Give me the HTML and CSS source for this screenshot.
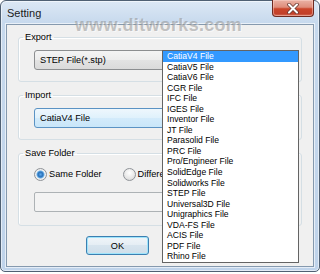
FILE: index.html
```html
<!DOCTYPE html>
<html lang="en">
<head>
  <meta charset="UTF-8">
  <title>Setting</title>
  <link rel="stylesheet" href="styles.css">
</head>
<body>

  <div class="window">
    <div class="titlebar">
      <span class="title">Setting</span>
      <button class="close-btn" aria-label="Close">
        <svg width="14" height="11" viewBox="0 0 14 11">
          <path d="M3 1.5 L11 9.5 M11 1.5 L3 9.5" stroke="#6b3a33" stroke-width="3.6" stroke-linecap="round"/>
          <path d="M3 1.5 L11 9.5 M11 1.5 L3 9.5" stroke="#fff" stroke-width="2" stroke-linecap="round"/>
        </svg>
      </button>
    </div>

    <div class="client">
      <fieldset class="group">
        <legend>Export</legend>
        <div class="combo">
          <span>STEP File(*.stp)</span>
          <span class="arrow"></span>
        </div>
      </fieldset>

      <fieldset class="group">
        <legend>Import</legend>
        <div class="combo combo-active">
          <span>CatiaV4 File</span>
          <span class="arrow"></span>
        </div>
      </fieldset>

      <fieldset class="group group-save">
        <legend>Save Folder</legend>
        <!-- the dropdown covers the right part of this row -->
        <div class="radio-row">
          <label class="radio checked"><span class="circle"></span>Same Folder</label>
          <label class="radio"><span class="circle"></span>Differe</label>
        </div>
        <div class="textbox"></div>
      </fieldset>

      <div class="buttons">
        <button class="btn btn-default">OK</button>
        <span class="btn-slot"></span>
      </div>

      <ul class="droplist">
        <li class="selected">CatiaV4 File</li>
        <li>CatiaV5 File</li>
        <li>CatiaV6 File</li>
        <li>CGR File</li>
        <li>IFC File</li>
        <li>IGES File</li>
        <li>Inventor File</li>
        <li>JT File</li>
        <li>Parasolid File</li>
        <li>PRC File</li>
        <li>Pro/Engineer File</li>
        <li>SolidEdge File</li>
        <li>Solidworks File</li>
        <li>STEP File</li>
        <li>Universal3D File</li>
        <li>Unigraphics File</li>
        <li>VDA-FS File</li>
        <li>ACIS File</li>
        <li>PDF File</li>
        <li>Rhino File</li>
      </ul>
    </div>

    <div class="watermark">www.ditworks.com</div>
  </div>

</body>
</html>
```

FILE: styles.css
```css
body {
  margin: 0;
  background: #fff;
  font-family: "Liberation Sans", Arial, sans-serif;
  color: #000;
}
.window {
  position: relative;
  width: 320px;
  height: 272px;
  box-sizing: border-box;
  display: flex;
  flex-direction: column;
  padding: 0 5px 4px 5px;
  border: 1px solid #4f6073;
  border-radius: 6px 6px 5px 5px;
  background: linear-gradient(#dce8f5, #c7d9ed 22px, #bfd3ea);
  box-shadow: inset 0 0 0 1px rgba(255, 255, 255, 0.55);
}
.titlebar {
  display: flex;
  align-items: flex-start;
  height: 23px;
}
.title {
  margin: 6px 0 0 1px;
  font-size: 11px;
  line-height: 13px;
  color: #1b1b1b;
}
.close-btn {
  margin: -1px 0 0 auto;
  width: 42px;
  height: 17px;
  padding: 0;
  display: flex;
  align-items: center;
  justify-content: center;
  border: 1px solid #6e2a20;
  border-top: none;
  border-radius: 0 0 4px 4px;
  background: linear-gradient(#eab2a5, #df8d7b 45%, #cb452a 55%, #c2402a 85%, #d6705a);
  box-shadow: inset 0 0 0 1px rgba(255, 220, 210, 0.45);
}
.client {
  position: relative;
  flex: 1;
  padding-top: 6px;
  background: #f0f0f0;
  border: 1px solid #8599ae;
  box-shadow: 0 0 0 1px rgba(255, 255, 255, 0.6);
  font-size: 9.2px;
}
.group {
  margin: 0 11px 8px;
  padding: 7px 15px 11px;
  border: 1px solid #d5dfe5;
  border-radius: 3px;
  box-shadow: inset 1px 1px 0 #fff;
}
.group + .group {
  margin-top: -1px;
}
.group-save {
  margin-top: 0;
  padding-top: 8px;
  padding-bottom: 13px;
}
.group legend {
  margin-left: -11px;
  padding: 0 2px;
  line-height: 12px;
}
.combo {
  display: flex;
  align-items: center;
  height: 20px;
  box-sizing: border-box;
  padding: 0 0 0 5px;
  border: 1px solid #8c8e90;
  border-radius: 3px;
  background: linear-gradient(#f4f4f4, #ececec 50%, #e3e3e3 50%, #dadada);
}
.combo-active {
  border-color: #5b93c4;
  background: linear-gradient(#eef7fd, #dff1fc 50%, #d3ebfb 50%, #c9e6f9);
}
.combo .arrow {
  margin-left: auto;
  margin-right: 6px;
  border: 3px solid transparent;
  border-top: 4px solid #000;
  border-bottom: none;
}
.radio-row {
  display: flex;
  align-items: center;
  gap: 21px;
  height: 14px;
  width: 128px;
  overflow: hidden;
}
.radio {
  display: flex;
  align-items: center;
  gap: 2px;
  flex-shrink: 0;
}
.circle {
  width: 11px;
  height: 11px;
  border-radius: 50%;
  border: 1px solid #8f9398;
  background: radial-gradient(circle at 50% 35%, #ffffff, #e6e6e6 60%, #d0d0d0);
}
.radio.checked .circle {
  background: radial-gradient(circle, #5aa8ec 0, #2a6fb7 2.5px, #6ab0e8 3.5px, #f2f2f2 4.5px, #dcdcdc 100%);
}
.textbox {
  margin-top: 11px;
  height: 20px;
  box-sizing: border-box;
  border: 1px solid #adb2b5;
  border-radius: 2px;
  background: #f3f3f3;
}
.buttons {
  display: flex;
  justify-content: center;
  gap: 22px;
  margin-top: 10px;
}
.btn,
.btn-slot {
  width: 63px;
  height: 19px;
}
.btn {
  padding: 0;
  font-family: "Liberation Sans", Arial, sans-serif;
  font-size: 9.2px;
  color: #000;
  border: 1px solid #707070;
  border-radius: 3px;
  background: linear-gradient(#f2f2f2, #ebebeb 50%, #dddddd 50%, #cfcfcf);
}
.btn-default {
  border-color: #3c7fb1;
  box-shadow: inset 0 0 0 1px #9fe4fb;
  background: linear-gradient(#f0f5f9, #e4edf4 50%, #d7e4ee 50%, #cfdeea);
}
.droplist {
  position: absolute;
  left: 155px;
  top: 25px;
  width: 137px;
  box-sizing: border-box;
  margin: 0;
  padding: 0;
  list-style: none;
  border: 1px solid #646464;
  background: #fff;
  font-size: 8.6px;
}
.droplist li {
  height: 10.55px;
  line-height: 10.55px;
  padding-left: 4px;
}
.droplist li.selected {
  background: #3399ff;
  color: #fff;
}
.watermark {
  position: absolute;
  left: 74px;
  top: 15px;
  font-size: 18px;
  line-height: 18px;
  font-weight: bold;
  letter-spacing: 0.3px;
  color: rgba(140, 140, 140, 0.5);
  text-shadow: 1px 1px 0 rgba(255, 255, 255, 0.5);
  pointer-events: none;
}
```
